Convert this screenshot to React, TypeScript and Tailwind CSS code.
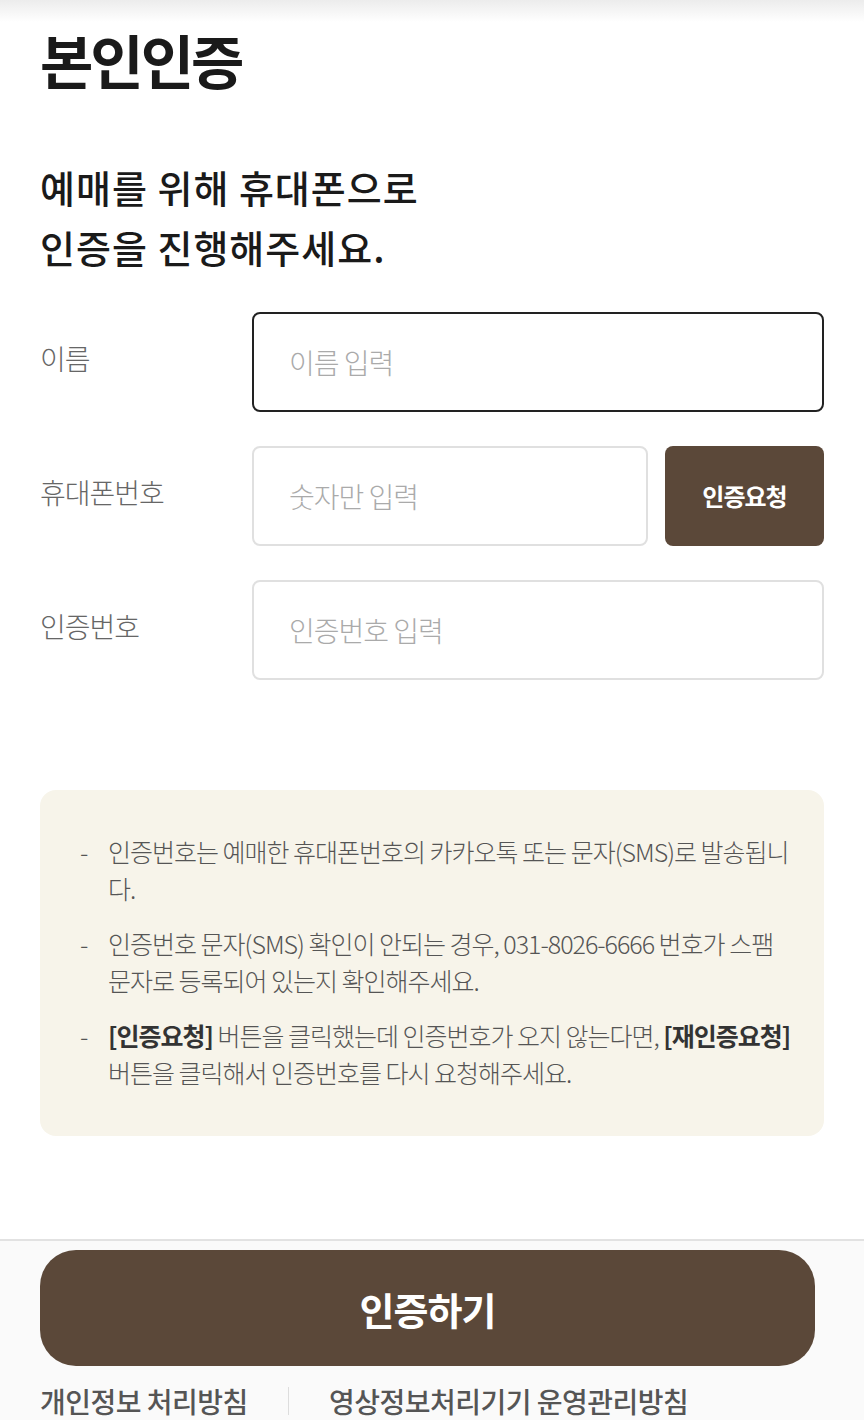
import React from "react";

const F = { fontFamily: '"Noto Sans CJK KR", "Noto Sans", sans-serif' };

export default function App() {
  return (
    <div className="w-[864px] h-[1420px] overflow-hidden bg-white flex flex-col" style={F}>
      <div className="h-[22px] bg-gradient-to-b from-[#ececec] to-white shrink-0" />
      <div className="px-10">
        <h1 className="text-[58px] leading-[70px] font-bold text-[#1a1a1a] tracking-[-3px] mt-[2px]">본인인증</h1>
        <p className="mt-[63px] text-[38px] leading-[60px] font-medium text-[#1a1a1a] tracking-[1px]">
          예매를 위해 휴대폰으로
          <br />
          인증을 진행해주세요.
        </p>

        <div className="mt-[35px] flex flex-col gap-[34px]">
          <div className="flex items-center">
            <div className="w-[212px] text-[28px] text-[#666] font-light tracking-[-1px] -mt-[8px]">이름</div>
            <div className="flex-1 h-[100px] rounded-[8px] border-2 border-[#222] flex items-center pl-[35px] text-[28px] font-light text-[#aaa] tracking-[-1px]">
              이름 입력
            </div>
          </div>
          <div className="flex items-center">
            <div className="w-[212px] text-[28px] text-[#666] font-light tracking-[-1px] -mt-[8px]">휴대폰번호</div>
            <div className="flex-1 h-[100px] rounded-[8px] border-2 border-[#e0e0e0] flex items-center pl-[35px] text-[28px] font-light text-[#aaa] tracking-[-1px]">
              숫자만 입력
            </div>
            <div className="ml-[17px] w-[159px] h-[100px] rounded-[8px] bg-[#5b4839] flex items-center justify-center text-white text-[24px] font-bold tracking-[-1px]">
              인증요청
            </div>
          </div>
          <div className="flex items-center">
            <div className="w-[212px] text-[28px] text-[#666] font-light tracking-[-1px] -mt-[8px]">인증번호</div>
            <div className="flex-1 h-[100px] rounded-[8px] border-2 border-[#e0e0e0] flex items-center pl-[35px] text-[28px] font-light text-[#aaa] tracking-[-1px]">
              인증번호 입력
            </div>
          </div>
        </div>

        <div className="mt-[110px] rounded-[16px] bg-[#f7f4ea] pl-[40px] pr-[26px] pt-[43px] pb-[45px] text-[25px] leading-[37px] text-[#555] font-light tracking-[-1px] flex flex-col gap-[18px]">
          <div className="flex">
            <span className="w-[28px] shrink-0">-</span>
            <span>인증번호는 예매한 휴대폰번호의 카카오톡 또는 문자(SMS)로 발송됩니다.</span>
          </div>
          <div className="flex">
            <span className="w-[28px] shrink-0">-</span>
            <span>인증번호 문자(SMS) 확인이 안되는 경우, 031-8026-6666 번호가 스팸 문자로 등록되어 있는지 확인해주세요.</span>
          </div>
          <div className="flex">
            <span className="w-[28px] shrink-0">-</span>
            <span>
              <b className="font-bold text-[#333] whitespace-nowrap">[인증요청]</b> 버튼을 클릭했는데 인증번호가 오지 않는다면,{" "}
              <b className="font-bold text-[#333] whitespace-nowrap">[재인증요청]</b> 버튼을 클릭해서 인증번호를 다시 요청해주세요.
            </span>
          </div>
        </div>
      </div>

      <div className="mt-[103px] border-t-2 border-[#e2e2e2] bg-[#fafafa] flex-1 pl-10 pr-[49px] pt-[9px]">
        <div className="h-[116px] rounded-[36px] bg-[#5b4839] flex items-center justify-center text-white text-[38px] font-bold tracking-[-1px]">
          인증하기
        </div>
        <div className="mt-[14px] flex items-center text-[28px] text-[#555] font-medium tracking-[-0.5px]">
          <span>개인정보 처리방침</span>
          <span className="mx-[40px] w-px h-[28px] bg-[#ddd]" />
          <span>영상정보처리기기 운영관리방침</span>
        </div>
      </div>
    </div>
  );
}
